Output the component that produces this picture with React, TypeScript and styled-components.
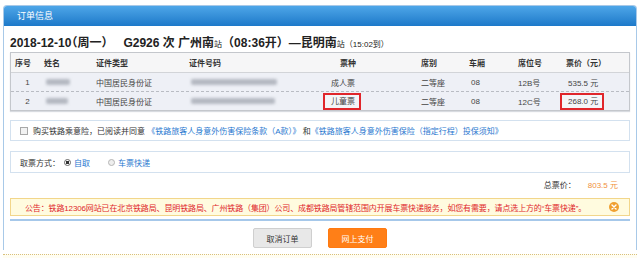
import styled, { createGlobalStyle } from 'styled-components';

const GlobalStyle = createGlobalStyle`
  *, *::before, *::after {
    box-sizing: border-box;
  }
  html, body {
    margin: 0;
    padding: 0;
    background: #fff;
  }
  body {
    font-family: "Liberation Sans", "Noto Sans CJK SC", sans-serif;
    color: #333;
    font-size: 8px;
  }
`;

const COLS = '33px 52px 93px 142px 90px 48px 49px 48px 1fr';

const passengers = [
  { no: '1', nameW: 24, idW: 86, type: '成人票', seat: '二等座', coach: '08', seatNo: '12B号', price: '535.5 元', mark: false },
  { no: '2', nameW: 22, idW: 84, type: '儿童票', seat: '二等座', coach: '08', seatNo: '12C号', price: '268.0 元', mark: true },
];

const Page = styled.div`
  padding: 5px 3px 0;
`;

const Panel = styled.section`
  border: 1px solid #a8c9e8;
  border-bottom: none;
  border-radius: 4px 4px 0 0;
  padding-bottom: 2px;
`;

const PanelHeader = styled.div`
  height: 20px;
  line-height: 20px;
  padding-left: 13px;
  color: #fff;
  font-size: 9px;
  border-radius: 3px 3px 0 0;
  background: linear-gradient(#4ea6e8, #1d79c9);
`;

const PanelBody = styled.div`
  padding: 0 6px;
`;

const Title = styled.h1`
  margin: 9px 0 0;
  height: 17px;
  line-height: 17px;
  font-size: 12px;
  font-weight: bold;
  color: #222;
  white-space: nowrap;

  .half {
    font-feature-settings: "halt";
    margin-right: 16px;
  }

  small {
    font-size: 8px;
    font-weight: normal;
  }
`;

const Table = styled.div`
  border: 1px solid #c4c7cc;
  box-shadow: 0 1px 1px #d8dbe0;
`;

const Row = styled.div<{ $head?: boolean; $dotted?: boolean }>`
  display: grid;
  grid-template-columns: ${COLS};
  height: 19px;
  align-items: center;
  background: ${p => (p.$head ? '#f6f6f7' : '#eef0f6')};
  border-top: ${p => (p.$head ? 'none' : p.$dotted ? '1px dashed #b9bcc3' : '1px solid #d2d4d8')};
  font-weight: ${p => (p.$head ? 'bold' : 'normal')};
  color: ${p => (p.$head ? '#333' : '#444')};
`;

const Cell = styled.div<{ $indent?: number; $center?: boolean }>`
  padding-left: ${p => p.$indent ?? 0}px;
  text-align: ${p => (p.$center ? 'center' : 'left')};
  white-space: nowrap;
`;

const Blur = styled.div<{ $w: number }>`
  width: ${p => p.$w}px;
  height: 6px;
  margin-left: 2px;
  background: #b4b8c1;
  border-radius: 2px;
  filter: blur(1.4px);
`;

const Marked = styled.span`
  display: inline-block;
  border: 2px solid #e0262b;
  padding: 1px 4px 1px 6px;
  margin-left: -8px;
  line-height: 11px;
  background: #f4f5f8;
`;

const Box = styled.div<{ $top: number; $h: number }>`
  margin-top: ${p => p.$top}px;
  height: ${p => p.$h}px;
  border: 1px solid #d3e1ef;
  background: #fff;
  display: flex;
  align-items: center;
  padding-left: 9px;
  white-space: nowrap;
`;

const Check = styled.span`
  width: 8px;
  height: 8px;
  border: 1px solid #a8a8a8;
  background: #f2f2f2;
  margin-right: 5px;
`;

const Link = styled.a`
  color: #2877cf;
  text-decoration: none;
`;

const Radio = styled.span<{ $on?: boolean }>`
  width: 7px;
  height: 7px;
  border-radius: 50%;
  border: 1px solid ${p => (p.$on ? '#666' : '#b5b5b5')};
  background: ${p => (p.$on ? 'radial-gradient(#333 0 1.5px, #fff 2px)' : '#eee')};
  margin: 0 3px 0 4px;
`;

const Choice = styled(Link)`
  margin-right: 14px;
`;

const Total = styled.div`
  margin-top: 6px;
  height: 14px;
  line-height: 14px;
  display: flex;
  justify-content: flex-end;
  padding-right: 12px;
  gap: 12px;

  b {
    font-weight: normal;
    color: #f0903c;
  }
`;

const Notice = styled.div`
  margin-top: 5px;
  height: 18px;
  border: 1px solid #f2d68a;
  background: #fffbdf;
  color: #e0262b;
  display: flex;
  align-items: center;
  padding: 0 10px 0 14px;
  white-space: nowrap;
`;

const NoticeText = styled.p`
  flex: 1;
  margin: 0;
  letter-spacing: -0.14px;
`;

const Close = styled.span`
  flex: none;
  width: 10px;
  height: 10px;
  border-radius: 50%;
  background: #f0a030;
  display: flex;
  align-items: center;
  justify-content: center;
`;

const Divider = styled.div`
  margin-top: 3px;
  height: 2px;
  background: #a6c8ea;
`;

const Actions = styled.div`
  margin-top: 7px;
  display: flex;
  justify-content: center;
  gap: 16px;
`;

const Button = styled.button<{ $primary?: boolean }>`
  width: 59px;
  height: 20px;
  border-radius: 2px;
  font-family: inherit;
  font-size: 8px;
  padding: 0;
  cursor: pointer;
  border: 1px solid ${p => (p.$primary ? '#ff7a10' : '#cfcfcf')};
  background: ${p => (p.$primary ? '#ff7f17' : '#e8e8e8')};
  color: ${p => (p.$primary ? '#fff' : '#333')};
`;

const Footer = styled.div`
  margin-top: 4px;
  border-top: 1px dotted #d9c07a;
  height: 4px;
  background: #fffdf2;
`;

export default function App() {
  return (
    <>
      <GlobalStyle />
      <Page>
        <Panel>
          <PanelHeader>订单信息</PanelHeader>
          <PanelBody>
            <Title>
              2018-12-10<span className="half">（周一）</span>G2926 次 广州南<small>站</small>（08:36开）—昆明南<small>站（15:02到）</small>
            </Title>

            <Table>
              <Row $head>
                <Cell $indent={4}>序号</Cell>
                <Cell>姓名</Cell>
                <Cell>证件类型</Cell>
                <Cell>证件号码</Cell>
                <Cell $indent={9}>票种</Cell>
                <Cell>席别</Cell>
                <Cell>车厢</Cell>
                <Cell>席位号</Cell>
                <Cell>票价（元）</Cell>
              </Row>
              {passengers.map((p, i) => (
                <Row key={p.no} $dotted={i > 0}>
                  <Cell $center>{p.no}</Cell>
                  <Blur $w={p.nameW} />
                  <Cell>中国居民身份证</Cell>
                  <Blur $w={p.idW} />
                  <Cell>{p.mark ? <Marked>{p.type}</Marked> : p.type}</Cell>
                  <Cell>{p.seat}</Cell>
                  <Cell $indent={2}>{p.coach}</Cell>
                  <Cell>{p.seatNo}</Cell>
                  <Cell $indent={2}>{p.mark ? <Marked>{p.price}</Marked> : p.price}</Cell>
                </Row>
              ))}
            </Table>

            <Box $top={9} $h={21}>
              <Check />
              购买铁路乘意险，已阅读并同意&nbsp;
              <Link>《铁路旅客人身意外伤害保险条款（A款）》</Link>
              &nbsp;和<Link>《铁路旅客人身意外伤害保险（指定行程）投保须知》</Link>
            </Box>

            <Box $top={10} $h={22}>
              取票方式：
              <Radio $on />
              <Choice>自取</Choice>
              <Radio />
              <Choice>车票快递</Choice>
            </Box>

            <Total>
              <span>总票价：</span>
              <b>803.5 元</b>
            </Total>

            <Notice>
              <NoticeText>公告：铁路12306网站已在北京铁路局、昆明铁路局、广州铁路（集团）公司、成都铁路局管辖范围内开展车票快递服务，如您有需要，请点选上方的“车票快递”。</NoticeText>
              <Close>
                <svg width="6" height="6" viewBox="0 0 6 6">
                  <path d="M1 1L5 5M5 1L1 5" stroke="#fff" strokeWidth="1.4" strokeLinecap="round" />
                </svg>
              </Close>
            </Notice>

            <Divider />

            <Actions>
              <Button>取消订单</Button>
              <Button $primary>网上支付</Button>
            </Actions>
          </PanelBody>
        </Panel>
        <Footer />
      </Page>
    </>
  );
}
